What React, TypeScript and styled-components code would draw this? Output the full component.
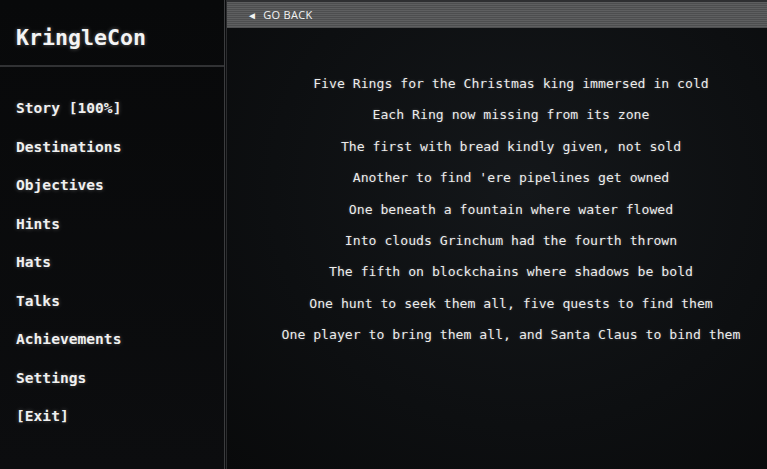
import React from 'react';
import styled, { createGlobalStyle } from 'styled-components';

const GlobalStyle = createGlobalStyle`
  html, body {
    margin: 0;
    padding: 0;
    background: #0b0c0e;
  }
  #root {
    height: 100vh;
  }
`;

const Layout = styled.div`
  display: flex;
  width: 100%;
  height: 100vh;
  overflow: hidden;
  font-family: "DejaVu Sans Mono", "Liberation Mono", monospace;
  color: #f2f2f2;
`;

const Sidebar = styled.nav`
  width: 224px;
  flex-shrink: 0;
  display: flex;
  flex-direction: column;
  background: linear-gradient(180deg, #08090a 0%, #0c0d0f 100%);
  border-right: 1px solid #3c3d3f;
`;

const Brand = styled.div`
  height: 67px;
  box-sizing: border-box;
  padding: 25px 0 0 16px;
  font-size: 21.6px;
  font-weight: 700;
  color: #f4f4f4;
  text-shadow: 0 0 4px rgba(255, 255, 255, 0.35);
  border-bottom: 2px solid #313234;
`;

const Menu = styled.ul`
  list-style: none;
  margin: 0;
  padding: 32px 0 0 16px;
  display: flex;
  flex-direction: column;
  gap: 20.5px;
`;

const MenuItem = styled.li`
  font-size: 14.6px;
  font-weight: 700;
  line-height: 18px;
  color: #f0f0f0;
  text-shadow: 0 0 4px rgba(255, 255, 255, 0.3);
  cursor: pointer;
`;

const Main = styled.main`
  flex: 1;
  display: flex;
  flex-direction: column;
  border-left: 1px solid #2b2c2e;
  margin-left: 1px;
  background: radial-gradient(ellipse at 55% 40%, #14171a 0%, #0d0f11 60%, #090a0b 100%);
`;

const TopBar = styled.div`
  height: 28px;
  flex-shrink: 0;
  box-sizing: border-box;
  display: flex;
  align-items: center;
  padding: 0 0 1px 20px;
  border-top: 2px solid #2e2f31;
  background: repeating-linear-gradient(
    180deg,
    #5e5f60 0px,
    #5e5f60 1px,
    #4d4e4f 1px,
    #4d4e4f 2px
  );
`;

const BackButton = styled.button`
  display: flex;
  align-items: center;
  gap: 6px;
  background: none;
  border: none;
  padding: 0;
  font-family: "Open Sans", "Liberation Sans", sans-serif;
  font-size: 11px;
  letter-spacing: 0.3px;
  color: #f4f4f4;
  cursor: pointer;
`;

const Arrow = styled.span`
  font-size: 10px;
  line-height: 1;
`;

const Poem = styled.div`
  display: flex;
  flex-direction: column;
  align-items: center;
  padding: 47px 0 0 28px;
  gap: 13.4px;
`;

const Line = styled.p`
  margin: 0;
  font-size: 13.15px;
  line-height: 18px;
  color: #ececec;
  white-space: pre;
  text-shadow: 0 0 3px rgba(255, 255, 255, 0.25);
`;

const menu = [
  'Story [100%]',
  'Destinations',
  'Objectives',
  'Hints',
  'Hats',
  'Talks',
  'Achievements',
  'Settings',
  '[Exit]',
];

const poem = [
  'Five Rings for the Christmas king immersed in cold',
  'Each Ring now missing from its zone',
  'The first with bread kindly given, not sold',
  "Another to find 'ere pipelines get owned",
  'One beneath a fountain where water flowed',
  'Into clouds Grinchum had the fourth thrown',
  'The fifth on blockchains where shadows be bold',
  'One hunt to seek them all, five quests to find them',
  'One player to bring them all, and Santa Claus to bind them',
];

const App: React.FC = () => (
  <>
    <GlobalStyle />
    <Layout>
      <Sidebar>
        <Brand>KringleCon</Brand>
        <Menu>
          {menu.map((m) => (
            <MenuItem key={m}>{m}</MenuItem>
          ))}
        </Menu>
      </Sidebar>
      <Main>
        <TopBar>
          <BackButton>
            <Arrow>◄</Arrow>GO BACK
          </BackButton>
        </TopBar>
        <Poem>
          {poem.map((l) => (
            <Line key={l}>{l}</Line>
          ))}
        </Poem>
      </Main>
    </Layout>
  </>
);

export default App;
